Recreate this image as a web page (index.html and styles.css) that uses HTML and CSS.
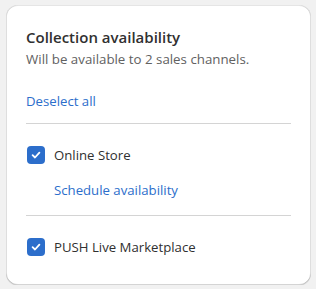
FILE: index.html
```html
<!DOCTYPE html>
<html>
<head>
<meta charset="utf-8">
<link rel="stylesheet" href="styles.css">
</head>
<body>
<div class="card">
  <div class="header">
    <h2 class="title">Collection availability</h2>
    <p class="subtitle">Will be available to 2 sales channels.</p>
  </div>
  <a class="link deselect" href="#">Deselect all</a>
  <ul class="channels">
    <li class="channel">
      <label class="check">
        <span class="box"><svg width="12" height="12" viewBox="0 0 12 12"><path d="M2.6 6.2 L5 8.5 L9.4 3.6" fill="none" stroke="#fff" stroke-width="1.8" stroke-linecap="round" stroke-linejoin="round"/></svg></span>
        <span class="label">Online Store</span>
      </label>
      <a class="link schedule" href="#">Schedule availability</a>
    </li>
    <li class="channel">
      <label class="check">
        <span class="box"><svg width="12" height="12" viewBox="0 0 12 12"><path d="M2.6 6.2 L5 8.5 L9.4 3.6" fill="none" stroke="#fff" stroke-width="1.8" stroke-linecap="round" stroke-linejoin="round"/></svg></span>
        <span class="label">PUSH Live Marketplace</span>
      </label>
    </li>
  </ul>
</div>
</body>
</html>
```
FILE: styles.css
```css
html, body {
  margin: 0;
  padding: 0;
  background: #f1f1f1;
}
body {
  padding: 5px 5px 0 6px;
  font-family: "Segoe UI", "Open Sans", sans-serif;
  font-size: 13px;
  color: #303030;
}
.card {
  width: 305px;
  height: 280px;
  box-sizing: border-box;
  background: #fff;
  border-radius: 12px;
  box-shadow: 0 1px 0 0 rgba(26,26,26,0.07), 0 1px 0 0 rgba(204,204,204,0.5) inset, 0 -1px 0 0 rgba(0,0,0,0.17) inset, -1px 0 0 0 rgba(0,0,0,0.13) inset, 1px 0 0 0 rgba(0,0,0,0.13) inset;
  padding: 22px 20px 0 20px;
  display: flex;
  flex-direction: column;
}
.title {
  margin: 0;
  font-size: 15px;
  line-height: 20px;
  font-weight: 600;
  color: #303030;
}
.subtitle {
  margin: 3px 0 0;
  font-size: 13.3px;
  line-height: 18px;
  color: #616161;
}
.link {
  color: #2c6ecb;
  text-decoration: none;
  font-size: 13.2px;
  line-height: 18px;
}
.deselect {
  margin-top: 24px;
  padding-bottom: 13px;
  border-bottom: 1px solid #d4d4d4;
  align-self: stretch;
  display: block;
}
.channels {
  list-style: none;
  margin: 0;
  padding: 0;
}
.channel {
  padding: 22px 0 16px;
  display: flex;
  flex-direction: column;
  gap: 17px;
}
.channel + .channel {
  border-top: 1px solid #d4d4d4;
  padding-top: 22px;
}
.check {
  display: flex;
  align-items: center;
  gap: 9px;
  padding-left: 1px;
}
.box {
  width: 18px;
  height: 18px;
  border-radius: 4px;
  background: #2c6ecb;
  display: flex;
  align-items: center;
  justify-content: center;
}
.box svg { display: block; }
.label {
  font-size: 13.2px;
  line-height: 18px;
  color: #303030;
}
.schedule {
  padding-left: 28px;
}
```
